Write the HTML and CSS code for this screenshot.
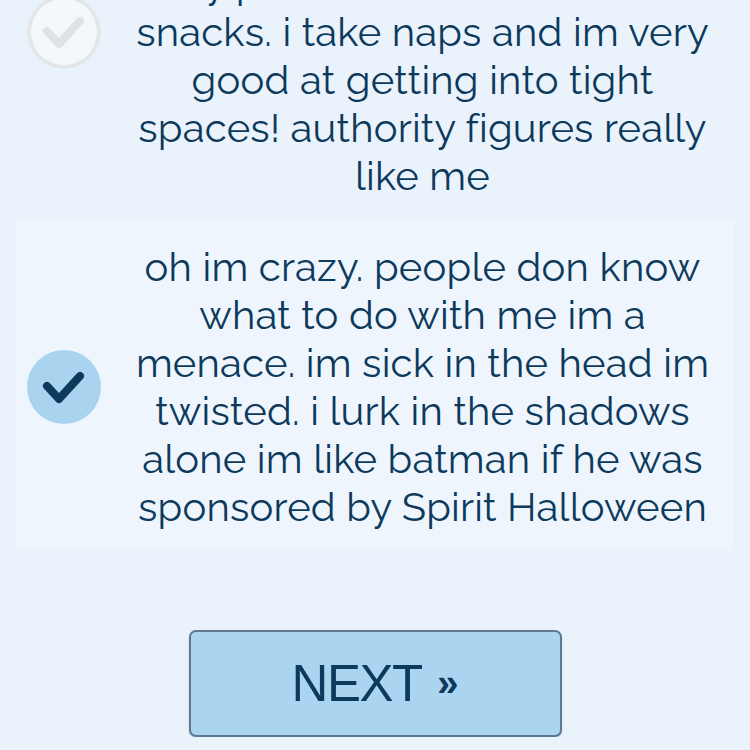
FILE: index.html
```html
<!DOCTYPE html>
<html>
<head>
<meta charset="utf-8">
<link rel="stylesheet" href="styles.css">
</head>
<body>
<div class="page">
  <div class="options">
    <div class="option">
      <div class="check off">
        <svg viewBox="0 0 74 74" width="74" height="74"><path d="M20 36 L32 49 L53 26" /></svg>
      </div>
      <div class="text">im just a little guy and i love to play all day. im a<br>lazy pet who loves treats and snacks. i take naps and im very good at getting into tight spaces! authority figures really like me</div>
    </div>
    <div class="option selected">
      <div class="check on">
        <svg viewBox="0 0 74 74" width="74" height="74"><path d="M20 36 L32 49 L53 26" /></svg>
      </div>
      <div class="text">oh im crazy. people don know what to do with me im a menace. im sick in the head im twisted. i lurk in the shadows alone im like batman if he was sponsored by Spirit Halloween</div>
    </div>
  </div>
  <div class="actions">
    <button class="next">NEXT <span class="arrows">»</span></button>
  </div>
</div>
</body>
</html>
```

FILE: styles.css
```css
html, body {
  margin: 0;
  padding: 0;
  background: #eaf2fb;
}
.page {
  margin-top: -160px;
  font-family: "Raleway", Lato, "Open Sans", sans-serif;
  color: #0d3a5c;
}
.options {
  display: flex;
  flex-direction: column;
  padding: 0 16px;
}
.option {
  display: flex;
  align-items: center;
  padding: 24px 16px 19px 11px;
}
.option.selected {
  background: #eef5fc;
}
.check {
  flex: 0 0 74px;
  width: 74px;
  height: 74px;
  border-radius: 50%;
  box-sizing: border-box;
}
.check svg {
  display: block;
  fill: none;
  stroke-linecap: round;
  stroke-linejoin: round;
  stroke-width: 8;
}
.check.off {
  background: #f5f8fb;
  box-shadow: inset 0 0 0 4px #e3e6e9;
}
.check.off svg { stroke: #dfe2e5; }
.check.on {
  background: #a9d3ee;
}
.check.on svg { stroke: #0d3a5c; }
.text {
  flex: 1;
  margin-left: 26px;
  text-align: center;
  font-size: 40px;
  line-height: 48px;
  letter-spacing: 0.2px;
}
.actions {
  display: flex;
  justify-content: center;
  padding-top: 80px;
}
.next {
  width: 373px;
  height: 107px;
  background: #aad4ef;
  border: 2px solid #5d7890;
  border-radius: 7px;
  font-family: "Liberation Sans", Arial, sans-serif;
  font-size: 51px;
  letter-spacing: -1.5px;
  color: #0d3a5c;
  padding: 0;
  box-shadow: 0 1px 2px rgba(0,0,0,0.15);
}
.arrows {
  font-size: 38px;
  vertical-align: 5px;
  font-weight: bold;
  letter-spacing: 0;
  margin-left: 4px;
}
```
